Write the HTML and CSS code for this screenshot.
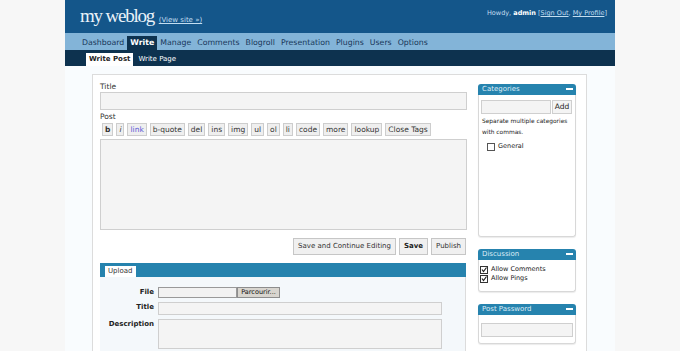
FILE: index.html
```
<!DOCTYPE html>
<html lang="en">
<head>
  <meta charset="UTF-8">
  <title>my weblog &rsaquo; Write Post</title>
  <link rel="stylesheet" href="styles.css">
</head>
<body>
<div class="page">

  <div class="head">
    <h1>my weblog <a href="#" class="view-site">(View site &raquo;)</a></h1>
    <div class="user">Howdy, <b>admin</b> [<a href="#">Sign Out</a>, <a href="#">My Profile</a>]</div>
  </div>

  <ul class="menu">
    <li>Dashboard</li>
    <li class="current">Write</li>
    <li>Manage</li>
    <li>Comments</li>
    <li>Blogroll</li>
    <li>Presentation</li>
    <li>Plugins</li>
    <li>Users</li>
    <li>Options</li>
  </ul>

  <ul class="submenu">
    <li class="current">Write Post</li>
    <li>Write Page</li>
  </ul>

  <div class="body">
    <div class="panel">

      <div class="main">
        <div class="label">Title</div>
        <div class="field title-field"></div>

        <div class="label post-label">Post</div>
        <div class="toolbar">
          <span class="tb bold">b</span>
          <span class="tb ital">i</span>
          <span class="tb link">link</span>
          <span class="tb">b-quote</span>
          <span class="tb">del</span>
          <span class="tb">ins</span>
          <span class="tb">img</span>
          <span class="tb">ul</span>
          <span class="tb">ol</span>
          <span class="tb">li</span>
          <span class="tb">code</span>
          <span class="tb">more</span>
          <span class="tb">lookup</span>
          <span class="tb">Close Tags</span>
        </div>
        <div class="field post-area"></div>

        <div class="actions">
          <span class="btn">Save and Continue Editing</span>
          <span class="btn strong">Save</span>
          <span class="btn">Publish</span>
        </div>

        <div class="upload-bar">
          <span class="upload-tab">Upload</span>
        </div>
        <div class="upload">
          <div class="row">
            <span class="ulabel">File</span>
            <span class="file-input"></span><span class="browse">Parcourir...</span>
          </div>
          <div class="row">
            <span class="ulabel">Title</span>
            <span class="field up-title"></span>
          </div>
          <div class="row">
            <span class="ulabel">Description</span>
            <span class="field up-desc"></span>
          </div>
        </div>
      </div>

      <div class="side">
        <div class="box cat-box">
          <div class="box-head">Categories <span class="toggle"></span></div>
          <div class="box-body">
            <div class="add-row">
              <span class="field cat-input"></span>
              <span class="add-btn">Add</span>
            </div>
            <p class="hint">Separate multiple categories with commas.</p>
            <div class="check-row cat-check"><span class="check"></span>General</div>
          </div>
        </div>

        <div class="box">
          <div class="box-head">Discussion <span class="toggle"></span></div>
          <div class="box-body disc-body">
            <div class="check-row"><span class="check on"><svg viewBox="0 0 6 6" width="6" height="6"><path d="M1 2.5 L2.5 4.5 L5.5 0.5" fill="none" stroke="#222" stroke-width="1.2"/></svg></span>Allow Comments</div>
            <div class="check-row"><span class="check on"><svg viewBox="0 0 6 6" width="6" height="6"><path d="M1 2.5 L2.5 4.5 L5.5 0.5" fill="none" stroke="#222" stroke-width="1.2"/></svg></span>Allow Pings</div>
          </div>
        </div>

        <div class="box">
          <div class="box-head">Post Password <span class="toggle"></span></div>
          <div class="box-body pass-body">
            <span class="field pass-input"></span>
          </div>
        </div>

        <div class="box">
          <div class="box-head"></div>
        </div>
      </div>

    </div>
  </div>

</div>
</body>
</html>
```

FILE: styles.css
```
html, body {
  height: 351px;
  overflow: hidden;
}

body {
  margin: 0;
  background: #f7f7f7;
  font-family: "DejaVu Sans", Verdana, sans-serif;
  color: #333;
}

ul {
  list-style: none;
  margin: 0;
  padding: 0;
}

.page {
  width: 550px;
  margin: 0 auto;
}

/* header */
.head {
  height: 33px;
  background: #14568a;
  display: flex;
  justify-content: space-between;
  padding: 0 8px 0 15px;
}

.head h1 {
  margin: 5px 0 0;
  font: normal 19px/22px "Liberation Serif", Georgia, serif;
  letter-spacing: -1.2px;
  color: #e9f2f9;
}

.view-site {
  font: 7px "DejaVu Sans", sans-serif;
  letter-spacing: 0;
  color: #c3def1;
  margin-left: 1px;
}

.user {
  font-size: 6.5px;
  color: #c3def1;
  padding-top: 9px;
}

.user b {
  color: #fff;
}

.user a {
  color: #c3def1;
}

/* menus */
.menu {
  height: 17px;
  background: #83b4d8;
  display: flex;
  align-items: flex-end;
  padding-left: 14px;
}

.menu li {
  font-size: 7.8px;
  line-height: 14px;
  padding: 0 3px;
  color: #18375a;
}

.menu li.current {
  background: #0d324f;
  color: #fff;
  font-weight: bold;
}

.submenu {
  height: 16px;
  background: #0d324f;
  display: flex;
  align-items: flex-end;
  padding-left: 21px;
}

.submenu li {
  font-size: 7px;
  line-height: 13px;
  padding: 0 3px;
  color: #fff;
  margin-right: 2px;
}

.submenu li.current {
  background: #fff;
  color: #222;
  font-weight: bold;
}

/* content */
.body {
  background: #f9fcfe;
  padding: 8px 28px 0 27px;
  height: 300px;
}

.panel {
  background: #fff;
  border: 1px solid #dcdcdc;
  border-bottom: none;
  height: 300px;
  display: flex;
}

.main {
  width: 367px;
  margin-left: 7px;
  padding-top: 7px;
}

.label {
  font-size: 7.5px;
  line-height: 10px;
}

.post-label {
  line-height: 11px;
  margin-top: 1px;
}

.field {
  display: block;
  background: #f4f4f4;
  border: 1px solid #cfcfcf;
  box-sizing: border-box;
}

.title-field {
  height: 18px;
}

.toolbar {
  display: flex;
  gap: 3px;
  padding-left: 2px;
  margin-top: 1px;
}

.tb {
  font-size: 7.5px;
  line-height: 11px;
  padding: 0 2px;
  background: #efefef;
  border: 1px solid #cdcdcd;
  color: #333;
}

.tb.bold {
  font-weight: bold;
}

.tb.ital {
  font-style: italic;
}

.tb.link {
  color: #5a5ad6;
}

.post-area {
  height: 91px;
  margin-top: 3px;
}

.actions {
  display: flex;
  justify-content: flex-end;
  gap: 3px;
  margin-top: 8px;
  padding-right: 1px;
}

.btn {
  font-size: 7px;
  line-height: 15px;
  padding: 0 4px;
  background: #f0f0f0;
  border: 1px solid #c6c6c6;
  color: #333;
}

.btn.strong {
  font-weight: bold;
  color: #222;
}

.upload-bar {
  height: 14px;
  margin-top: 8px;
  background: #2683ae;
  width: 366px;
  display: flex;
  align-items: flex-end;
  padding-left: 5px;
  box-sizing: border-box;
}

.upload-tab {
  background: #fff;
  font-size: 7px;
  line-height: 11px;
  padding: 0 3px;
  color: #333;
}

.upload {
  width: 366px;
  box-sizing: border-box;
  height: 80px;
  background: #f4f8fb;
  border-right: 1px solid #dcdcdc;
  padding-top: 10px;
}

.row {
  display: flex;
  align-items: flex-start;
  margin-bottom: 4px;
}

.ulabel {
  width: 54px;
  text-align: right;
  font-size: 7px;
  font-weight: bold;
  line-height: 10px;
  margin-right: 4px;
  color: #222;
}

.file-input {
  width: 79px;
  height: 11px;
  background: #f2f2f2;
  border: 1px solid #999;
  box-sizing: border-box;
}

.browse {
  width: 43px;
  height: 11px;
  box-sizing: border-box;
  background: #d8d5cf;
  border: 1px solid #8d8d8d;
  font-size: 6.5px;
  line-height: 9px;
  text-align: center;
  color: #111;
}

.up-title {
  width: 284px;
  height: 13px;
}

.up-desc {
  width: 284px;
  height: 30px;
}

/* sidebar */
.side {
  width: 98px;
  margin-left: 11px;
  padding-top: 9px;
}

.box {
  margin-bottom: 12px;
  border-radius: 3px;
  box-shadow: 0 1px 1px rgba(0, 0, 0, 0.08);
}

.box-head {
  background: #2683ae;
  color: #dcecf6;
  font-size: 7px;
  line-height: 11px;
  height: 11px;
  padding-left: 4px;
  border-radius: 3px 3px 0 0;
  position: relative;
}

.toggle {
  position: absolute;
  right: 3px;
  top: 4px;
  width: 7px;
  height: 2px;
  background: #fff;
}

.box-body {
  border: 1px solid #d8d8d8;
  border-top: none;
  border-radius: 0 0 3px 3px;
  padding: 5px 2px 0;
  font-size: 6.5px;
  color: #222;
}

.cat-box .box-body {
  height: 136px;
}

.add-row {
  display: flex;
  justify-content: space-between;
}

.cat-input {
  width: 70px;
  height: 14px;
}

.add-btn {
  width: 20px;
  height: 14px;
  box-sizing: border-box;
  border: 1px solid #cfcfcf;
  background: #f4f4f4;
  font-size: 7.5px;
  line-height: 12px;
  text-align: center;
  margin-right: 1px;
}

.hint {
  margin: 2px 0 0 1px;
  line-height: 11px;
  font-size: 5.9px;
}

.check-row {
  display: flex;
  align-items: center;
  line-height: 9px;
}

.cat-check {
  margin: 4px 0 0 6px;
}

.check {
  width: 6px;
  height: 6px;
  border: 1px solid #555;
  background: #fff;
  margin-right: 3px;
  display: flex;
}

.check.on {
  border-color: #333;
}

.disc-body {
  padding: 5px 1px 8px;
}

.pass-body {
  padding: 8px 2px 6px;
}

.pass-input {
  height: 14px;
}
```
